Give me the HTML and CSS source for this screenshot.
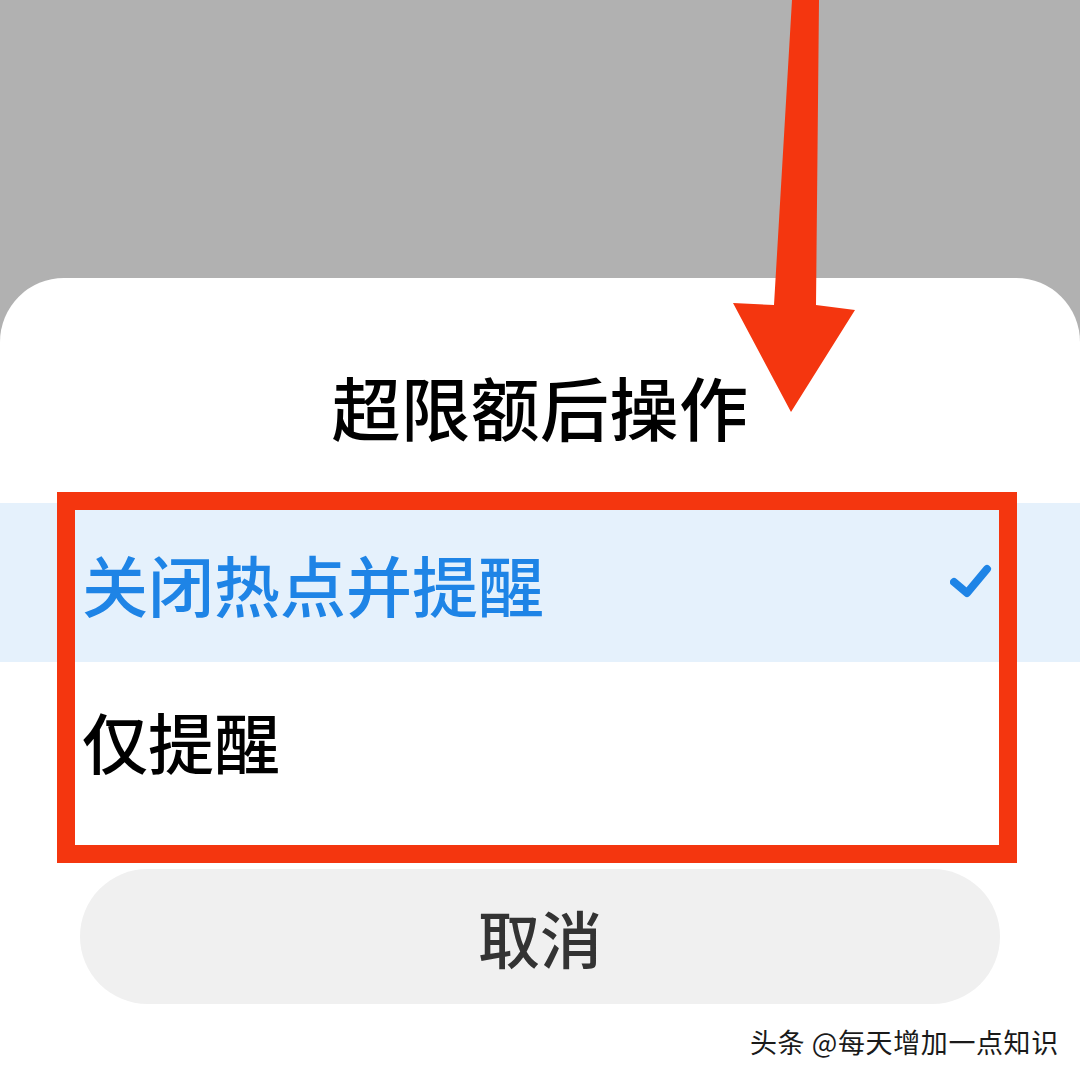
FILE: index.html
```html
<!DOCTYPE html>
<html>
<head>
    <meta charset="UTF-8">
    <title>超限额后操作</title>
    <link rel="stylesheet" href="styles.css">
</head>
<body>
    <div class="backdrop"></div>
    <div class="sheet">
        <h2 class="sheet-title">超限额后操作</h2>
        <div class="options">
            <div class="option selected">
                <span>关闭热点并提醒</span>
                <svg class="check" width="44" height="40" viewBox="0 0 44 40">
                    <polyline points="4,19 17,30 37,6" fill="none" stroke="#1e84e6" stroke-width="8" stroke-linecap="round" stroke-linejoin="round"/>
                </svg>
            </div>
            <div class="option">
                <span>仅提醒</span>
            </div>
        </div>
        <div class="cancel">取消</div>
    </div>
    <div class="highlight"></div>
    <svg class="arrow" width="1080" height="1080" viewBox="0 0 1080 1080">
        <polygon points="792,0 819,0 816,305 855,310 791,412 733,303 774,305" fill="#f4360f"/>
    </svg>
    <div class="watermark">头条 @每天增加一点知识</div>
</body>
</html>
```

FILE: styles.css
```css
html, body {
    margin: 0;
    padding: 0;
}
body {
    width: 1080px;
    height: 1080px;
    overflow: hidden;
    position: relative;
    background-color: #b1b1b1;
    font-family: "Noto Sans CJK SC", "Noto Sans", sans-serif;
}
.backdrop {
    height: 278px;
}
.sheet {
    background-color: #ffffff;
    border-radius: 64px 64px 0 0;
    height: 802px;
}
.sheet-title {
    margin: 0;
    padding-top: 36px;
    height: 189px;
    line-height: 185px;
    text-align: center;
    font-size: 69px;
    font-weight: 500;
    letter-spacing: 0.5px;
    color: #000000;
}
.option {
    height: 160px;
    padding: 0 86px 0 82px;
    display: flex;
    align-items: center;
    justify-content: space-between;
    font-size: 66px;
    font-weight: 500;
    color: #000000;
}
.option.selected {
    background-color: #e5f1fc;
    color: #1e84e6;
    height: 159px;
}
.option:last-child {
    height: 161px;
    padding-bottom: 6px;
    box-sizing: border-box;
}
.cancel {
    margin: 46px 80px 0;
    height: 135px;
    border-radius: 68px;
    background-color: #f0f0f0;
    display: flex;
    align-items: center;
    justify-content: center;
    font-size: 62px;
    font-weight: 500;
    color: #333333;
}
.highlight {
    position: absolute;
    left: 57px;
    top: 492px;
    width: 960px;
    height: 371px;
    border: 18px solid #f4360f;
    box-sizing: border-box;
}
.arrow {
    position: absolute;
    left: 0;
    top: 0;
}
.watermark {
    position: absolute;
    left: 750px;
    top: 1023px;
    font-size: 27px;
    line-height: 38px;
    letter-spacing: 0.6px;
    color: #1a1a1a;
    text-shadow: 2px 1px 0 #ffffff;
    white-space: nowrap;
}
```
